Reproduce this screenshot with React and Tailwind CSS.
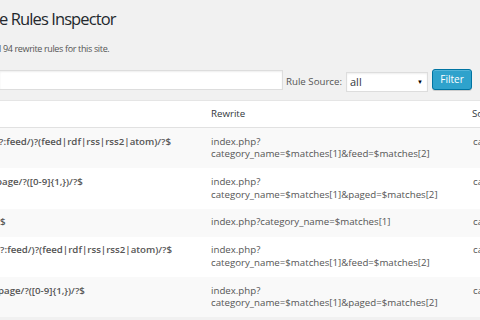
import React from 'react';

const rules = [
  { rule: '(?:feed/)?(feed|rdf|rss|rss2|atom)/?$', shift: '-ml-[4px]', rewrite: ['index.php?', 'category_name=$matches[1]&feed=$matches[2]'], source: 'category' },
  { rule: 'page/?([0-9]{1,})/?$', shift: '-ml-[4px]', rewrite: ['index.php?', 'category_name=$matches[1]&paged=$matches[2]'], source: 'category' },
  { rule: '$', shift: 'ml-0', rewrite: ['index.php?category_name=$matches[1]'], source: 'category' },
  { rule: '(?:feed/)?(feed|rdf|rss|rss2|atom)/?$', shift: '-ml-[3px]', rewrite: ['index.php?', 'category_name=$matches[1]&feed=$matches[2]'], source: 'category' },
  { rule: 'page/?([0-9]{1,})/?$', shift: '-ml-[2px]', rewrite: ['index.php?', 'category_name=$matches[1]&paged=$matches[2]'], source: 'category' },
];

function App() {
  return (
    <div className='w-[480px] h-[320px] overflow-hidden bg-[#f1f1f1] text-[#555]' style={{ fontFamily: '"Open Sans", sans-serif' }}>

      {/* heading */}
      <div className='pt-[8px]'>
        <h1 className='text-[16.5px] leading-[22px] tracking-[-0.9px] text-[#23282d] -ml-[1px]'>e Rules Inspector</h1>
        <p className='mt-[12.5px] text-[9px] leading-[12px] tracking-[-0.35px] -ml-[1px]'>l 94 rewrite rules for this site.</p>
      </div>

      {/* filter bar */}
      <div className='flex items-start mt-[14.5px]'>
        <input type='text' className='mt-[1px] w-[283px] h-[20px] bg-white border border-[#ddd] border-l-0 shadow-[inset_0_1px_2px_rgba(0,0,0,0.07)] outline-none' />
        <span className='ml-[3px] mt-[3px] text-[9.7px] leading-[20px] text-[#555]'>Rule Source:</span>
        <div className='ml-[4px] mt-[3px] w-[82px] h-[20px] bg-white border border-[#ddd] shadow-[inset_0_1px_2px_rgba(0,0,0,0.07)] flex items-center justify-between pl-[3px] pr-[4px]'>
          <span className='text-[11px] text-[#32373c]'>all</span>
          <span className='text-[6px] text-black'>▼</span>
        </div>
        <button className='ml-[4px] w-[40px] h-[21px] bg-[#2ea2cc] border border-[#0074a2] rounded-[3px] text-[10px] text-white shadow-[inset_0_1px_0_rgba(120,200,230,0.5),0_1px_0_rgba(0,0,0,0.15)]'>Filter</button>
      </div>

      {/* table */}
      <table className='mt-[8px] w-[520px] table-fixed bg-white border-t border-[#e5e5e5] border-collapse text-[9.7px] leading-[12.6px]'>
        <colgroup>
          <col className='w-[201px]' />
          <col className='w-[262px]' />
          <col />
        </colgroup>
        <thead>
          <tr className='border-b border-[#e1e1e1]'>
            <th className='h-[27px] p-0 font-normal text-left'></th>
            <th className='pl-[10px] font-normal text-left text-[#32373c]'>Rewrite</th>
            <th className='pl-[9px] font-normal text-left text-[#32373c]'>Source</th>
          </tr>
        </thead>
        <tbody>
          {rules.map((r, i) => (
            <tr key={i} className={i % 2 === 0 ? 'bg-[#f9f9f9]' : 'bg-white'}>
              <td className='align-top py-[7.6px] p-0 overflow-hidden whitespace-nowrap'>
                <div className={'font-semibold text-[#555] ' + r.shift}>{r.rule}</div>
              </td>
              <td className='align-top py-[7.6px] pl-[10px] whitespace-nowrap'>
                {r.rewrite.map((l, j) => <div key={j}>{l}</div>)}
              </td>
              <td className='align-top py-[7.6px] pl-[10px] whitespace-nowrap'>{r.source}</td>
            </tr>
          ))}
        </tbody>
      </table>
    </div>
  );
}

export default App;
